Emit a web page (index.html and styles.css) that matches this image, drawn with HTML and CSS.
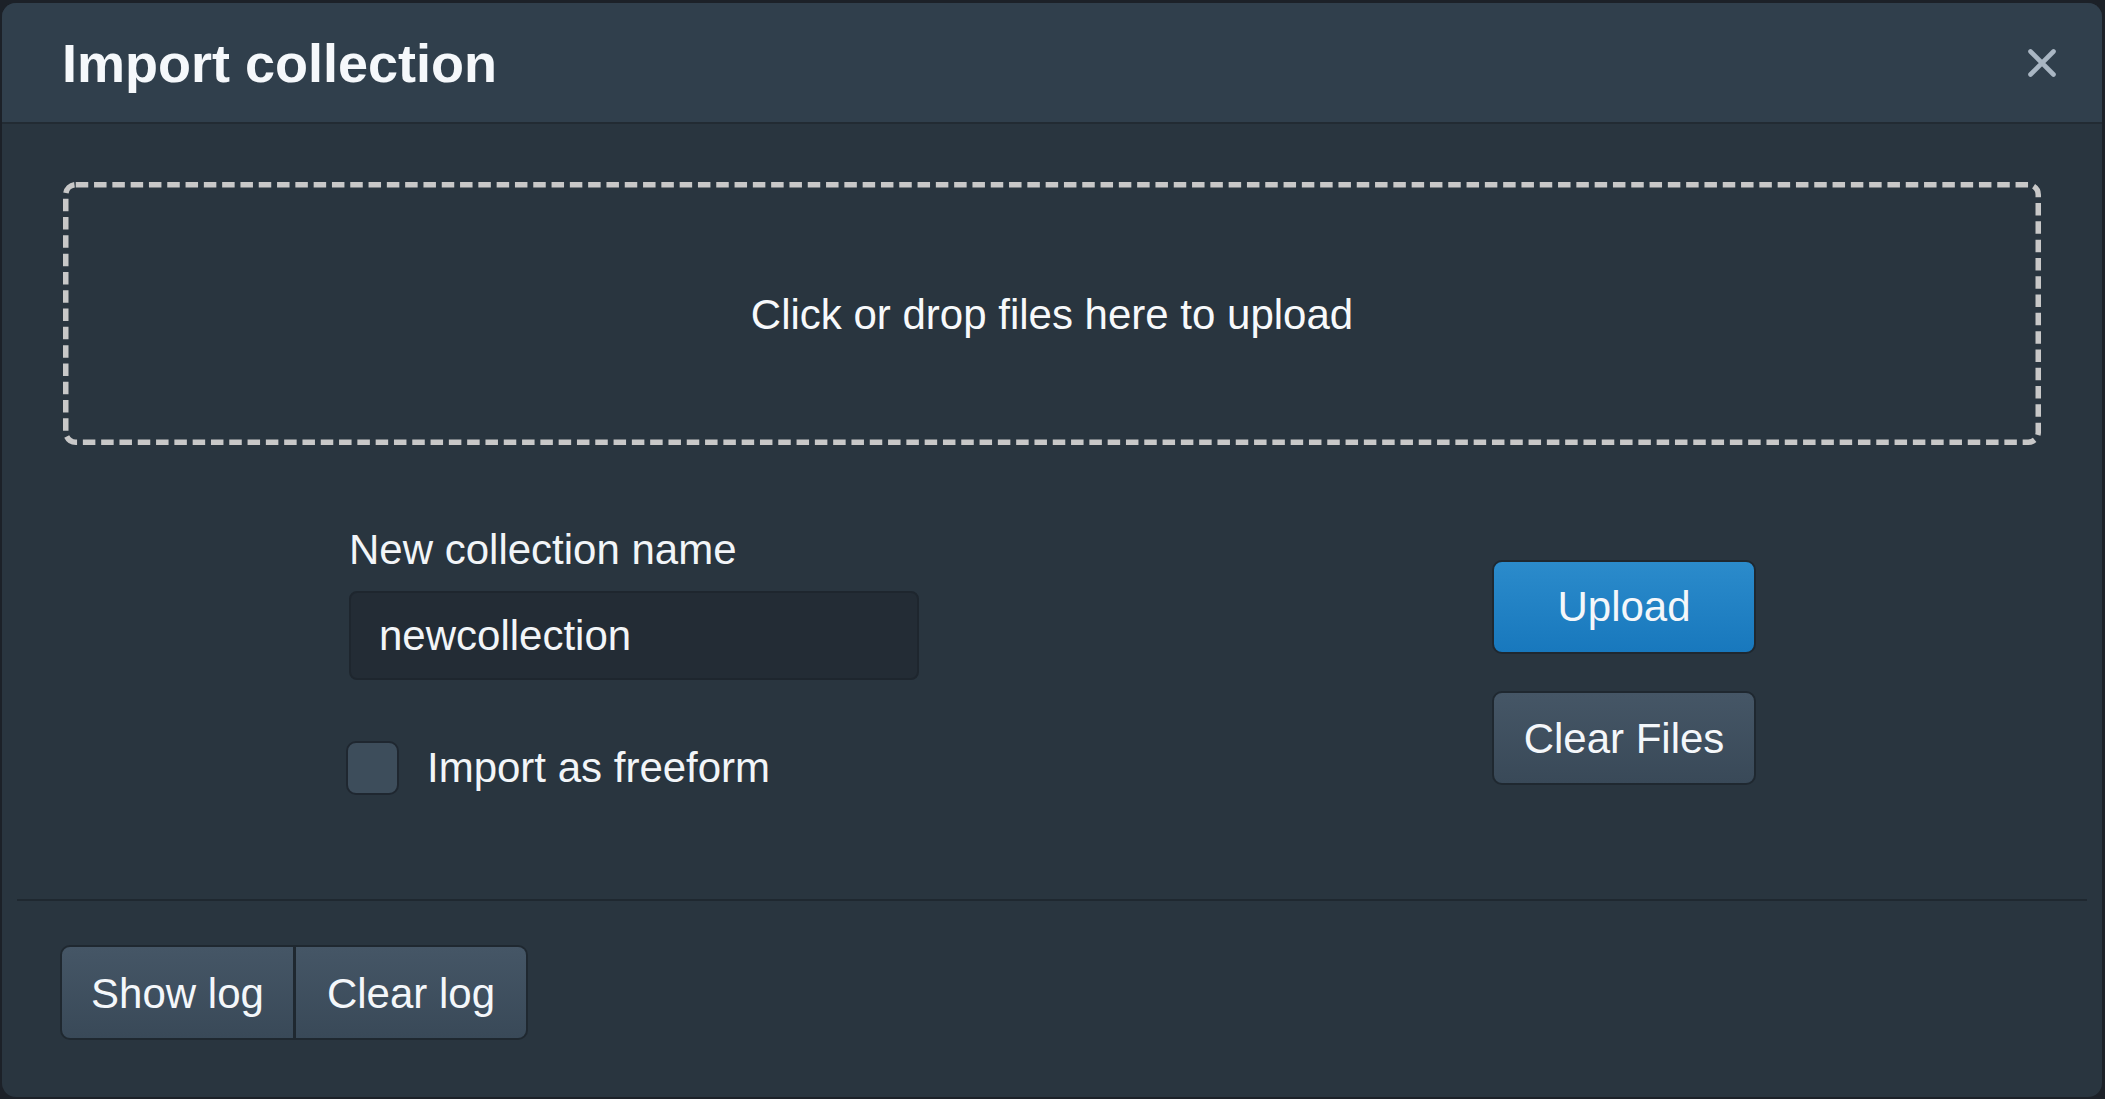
FILE: index.html
```html
<!DOCTYPE html>
<html lang="en">
<head>
<meta charset="utf-8">
<title>Import collection</title>
<link rel="stylesheet" href="styles.css">
</head>
<body>
<div class="modal">
  <div class="modal-header">
    <h4 class="modal-title">Import collection</h4>
    <button class="close" type="button" aria-label="Close">
      <svg width="30" height="30" viewBox="0 0 30 30"><path d="M3.5 3.5 L26.5 26.5 M26.5 3.5 L3.5 26.5" stroke="#a9b6c3" stroke-width="4.6" stroke-linecap="round" fill="none"/></svg>
    </button>
  </div>
  <div class="modal-body">
    <div class="dropzone">
      <svg class="dash-frame" aria-hidden="true"><rect class="dash-rect"/></svg>
      <span class="drop-text">Click or drop files here to upload</span>
    </div>
    <div class="form-row">
      <div class="form-col">
        <label class="field-label" for="cname">New collection name</label>
        <input class="text-input" id="cname" type="text" value="newcollection">
        <label class="check-row">
          <span class="checkbox"></span>
          <span class="check-label">Import as freeform</span>
        </label>
      </div>
      <div class="btn-col">
        <button class="btn btn-primary" type="button">Upload</button>
        <button class="btn btn-default" type="button">Clear Files</button>
      </div>
    </div>
  </div>
  <div class="modal-footer">
    <div class="btn-group">
      <button class="btn btn-default btn-left" type="button">Show log</button>
      <button class="btn btn-default btn-right" type="button">Clear log</button>
    </div>
  </div>
</div>
</body>
</html>
```
FILE: styles.css
```css
html, body {
  margin: 0;
  padding: 0;
  height: 100%;
}
body {
  background: #1c2128;
  font-family: "Liberation Sans", Arial, sans-serif;
  color: #f2f5f8;
  overflow: hidden;
}
.modal {
  box-sizing: border-box;
  margin: 3px 3px 2px 2px;
  height: 1094px;
  background: #29353f;
  border-radius: 14px;
  overflow: hidden;
  display: flex;
  flex-direction: column;
}
.modal-header {
  box-sizing: border-box;
  height: 121px;
  flex: 0 0 auto;
  background: #303f4c;
  border-bottom: 2px solid #222b33;
  display: flex;
  align-items: center;
  justify-content: space-between;
  padding: 0 45px 0 60px;
}
.modal-title {
  margin: 0;
  font-size: 54px;
  font-weight: bold;
  line-height: 60px;
  color: #f5f8fb;
}
.close {
  background: none;
  border: 0;
  padding: 0;
  width: 30px;
  height: 30px;
  display: block;
  cursor: pointer;
}
.close svg { display: block; }
.modal-body {
  flex: 1 1 auto;
  padding: 58px 61px 0 61px;
}
.dropzone {
  position: relative;
  box-sizing: border-box;
  height: 263px;
  display: flex;
  align-items: center;
  justify-content: center;
  font-size: 42px;
  color: #f7f9fb;
}
.dash-frame {
  position: absolute;
  left: 0;
  top: 0;
  width: 100%;
  height: 100%;
  overflow: visible;
}
.dash-rect {
  x: 2.75px;
  y: 2.75px;
  width: calc(100% - 5.5px);
  height: calc(100% - 5.5px);
  rx: 10px;
  ry: 10px;
  fill: none;
  stroke: #c8c8c8;
  stroke-width: 5.5px;
  stroke-dasharray: 12.5 5.8;
}
.drop-text {
  position: relative;
  top: 1px;
}
.form-row {
  display: flex;
  margin-top: 72px;
  padding-left: 286px;
}
.form-col {
  width: 570px;
  display: flex;
  flex-direction: column;
}
.field-label {
  font-size: 42px;
  line-height: 60px;
  color: #f2f5f8;
  margin-top: 3px;
  margin-bottom: 11px;
}
.text-input {
  box-sizing: border-box;
  width: 570px;
  height: 89px;
  margin: 0;
  background: #232c35;
  border: 2px solid #1e262e;
  border-radius: 8px;
  padding: 0 28px;
  font-family: "Liberation Sans", Arial, sans-serif;
  font-size: 42px;
  color: #f2f5f8;
  outline: none;
}
.check-row {
  display: flex;
  align-items: center;
  margin-top: 58px;
  margin-left: -3px;
}
.checkbox {
  box-sizing: border-box;
  width: 53px;
  height: 54px;
  background: #3d4d5b;
  border: 2px solid #1f2730;
  border-radius: 10px;
  margin-right: 28px;
}
.check-label {
  font-size: 42px;
  line-height: 60px;
  color: #f2f5f8;
}
.btn-col {
  display: flex;
  flex-direction: column;
  gap: 37px;
  margin-left: 573px;
  margin-top: 43px;
}
.btn {
  box-sizing: border-box;
  margin: 0;
  font-family: "Liberation Sans", Arial, sans-serif;
  font-size: 42px;
  color: #f4f7fa;
  border: 2px solid #1f2830;
  border-radius: 10px;
  cursor: pointer;
  padding: 0;
}
.btn-col .btn {
  width: 264px;
  height: 94px;
}
.btn-col .btn-default {
  padding-top: 2px;
}
.btn-primary {
  background: linear-gradient(#2b8bcb, #1878bd);
}
.btn-default {
  background: linear-gradient(#455666, #394958);
}
.modal-footer {
  flex: 0 0 auto;
  margin: 0 15px;
  border-top: 2px solid #1f2830;
  padding: 44px 42px 57px 43px;
}
.btn-group {
  display: flex;
}
.btn-group .btn {
  height: 95px;
  padding-top: 2px;
}
.btn-left {
  width: 236px;
  border-radius: 10px 0 0 10px;
  border-right-width: 3px;
}
.btn-right {
  width: 232px;
  border-left: 0;
  border-radius: 0 10px 10px 0;
}
```
